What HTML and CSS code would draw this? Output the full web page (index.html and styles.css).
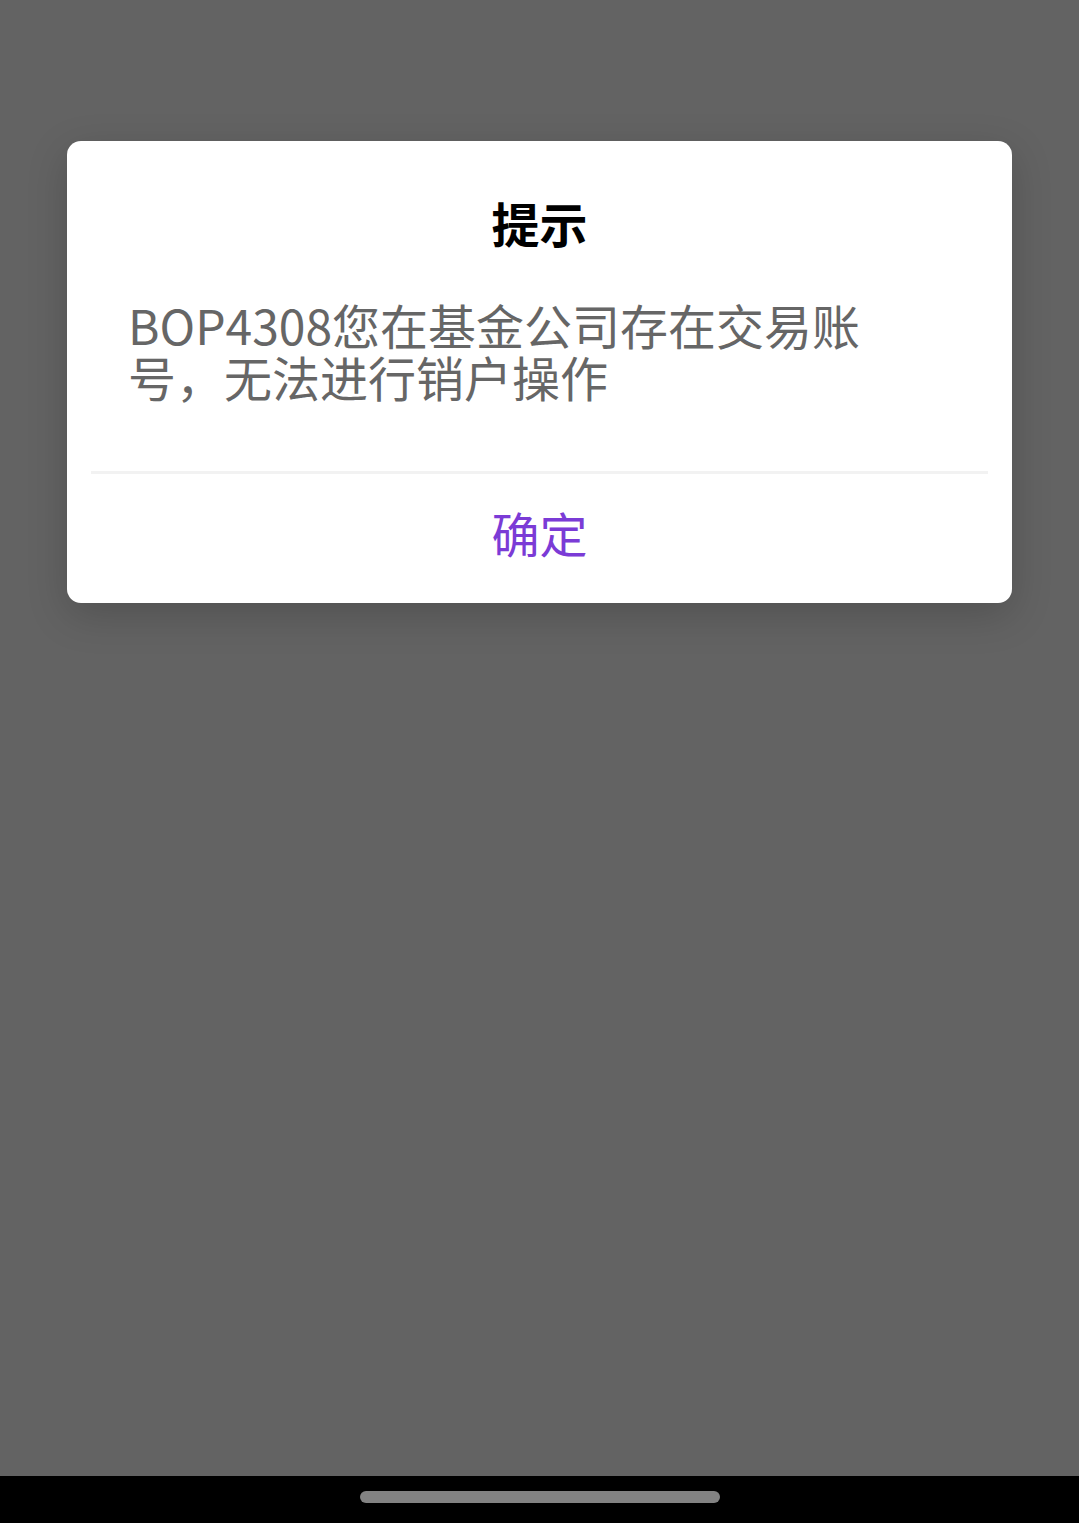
FILE: index.html
```html
<!doctype html>
<html lang="zh-CN">
<head>
    <meta charset="utf-8">
    <title>提示</title>
    <link rel="stylesheet" href="styles.css">
</head>
<body>
    <div class="screen">
        <div class="mask">
            <div class="dialog">
                <h2 class="dialog-title">提示</h2>
                <p class="dialog-msg">BOP4308您在基金公司存在交易账号，无法进行销户操作</p>
                <div class="dialog-line"></div>
                <div class="dialog-btn">确定</div>
            </div>
        </div>
        <div class="navbar">
            <span class="home-pill"></span>
        </div>
    </div>
</body>
</html>
```

FILE: styles.css
```css
html, body{
    margin: 0;
    padding: 0;
}
body{
    font-family: "Noto Sans CJK SC", "Noto Sans", sans-serif;
    background-color: #636363;
}
.screen{
    display: flex;
    flex-direction: column;
    height: 1523px;
}
.mask{
    flex: 1;
    background-color: #636363;
    padding-top: 141px;
    display: flex;
    justify-content: center;
    align-items: flex-start;
}
.dialog{
    width: 945px;
    background-color: #fff;
    border-radius: 14px;
    box-shadow: 0 12px 40px rgba(0, 0, 0, 0.18);
    display: flex;
    flex-direction: column;
}
.dialog-title{
    margin: 57px 0 0 0;
    font-size: 48px;
    line-height: 48px;
    font-weight: bold;
    color: #000;
    text-align: center;
}
.dialog-msg{
    margin: 52px 0 0 0;
    padding: 0 130px 0 61px;
    font-size: 48px;
    line-height: 52px;
    color: #666;
}
.dialog-line{
    margin: 69px 24px 0 24px;
    height: 3px;
    background-color: #f2f2f2;
}
.dialog-btn{
    height: 129px;
    box-sizing: border-box;
    padding-bottom: 14px;
    display: flex;
    align-items: center;
    justify-content: center;
    font-size: 48px;
    color: #7b3bd6;
}
.navbar{
    height: 47px;
    background-color: #000;
    display: flex;
    justify-content: center;
    padding-top: 15px;
    box-sizing: border-box;
}
.home-pill{
    width: 360px;
    height: 12px;
    border-radius: 6px;
    background-color: #828282;
}
```
